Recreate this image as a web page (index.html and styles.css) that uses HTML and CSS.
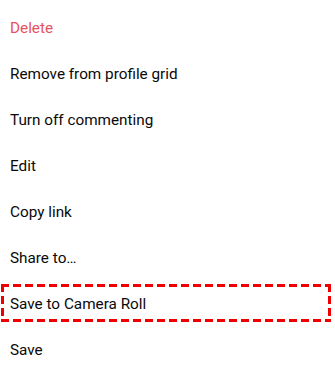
FILE: index.html
```html
<!DOCTYPE html>
<html lang="en">

<head>
  <meta charset="UTF-8">
  <meta name="viewport" content="width=device-width, initial-scale=1.0">
  <title>Options</title>
  <link rel="stylesheet" href="styles.css">
</head>

<body>
  <ul class="menu">
    <li class="menu-item danger">Delete</li>
    <li class="menu-item">Remove from profile grid</li>
    <li class="menu-item">Turn off commenting</li>
    <li class="menu-item">Edit</li>
    <li class="menu-item">Copy link</li>
    <li class="menu-item">Share to…</li>
    <li class="menu-item">
      <span class="highlight">Save to Camera Roll</span>
    </li>
    <li class="menu-item">Save</li>
  </ul>
</body>

</html>
```

FILE: styles.css
```css
body {
  margin: 0;
  background-color: #ffffff;
  font-family: Roboto, "Liberation Sans", sans-serif;
  color: #0a0a0a;
}

.menu {
  list-style: none;
  margin: 0;
  padding: 5px 0 0 0;
}

.menu-item {
  display: flex;
  align-items: center;
  height: 46px;
  padding-left: 10px;
  font-size: 15.3px;
}

.danger {
  color: #e5525f;
  /* Rouge pour l'action de suppression */
}

.menu-item:has(.highlight) {
  padding-left: 0;
}

.highlight {
  display: flex;
  align-items: center;
  box-sizing: border-box;
  width: 330px;
  height: 38px;
  margin: 3px 0 5px 1px;
  padding: 1px 0 0 9px;
  /* Cadre pointillé rouge, tirets de 8px */
  background:
    linear-gradient(90deg, #ee0000 8px, transparent 8px) left top / 12px 3px repeat-x,
    linear-gradient(90deg, #ee0000 8px, transparent 8px) left bottom / 12px 3px repeat-x,
    linear-gradient(180deg, #ee0000 8px, transparent 8px) left top / 3px 12px repeat-y,
    linear-gradient(180deg, #ee0000 8px, transparent 8px) right top / 3px 12px repeat-y;
}
```
